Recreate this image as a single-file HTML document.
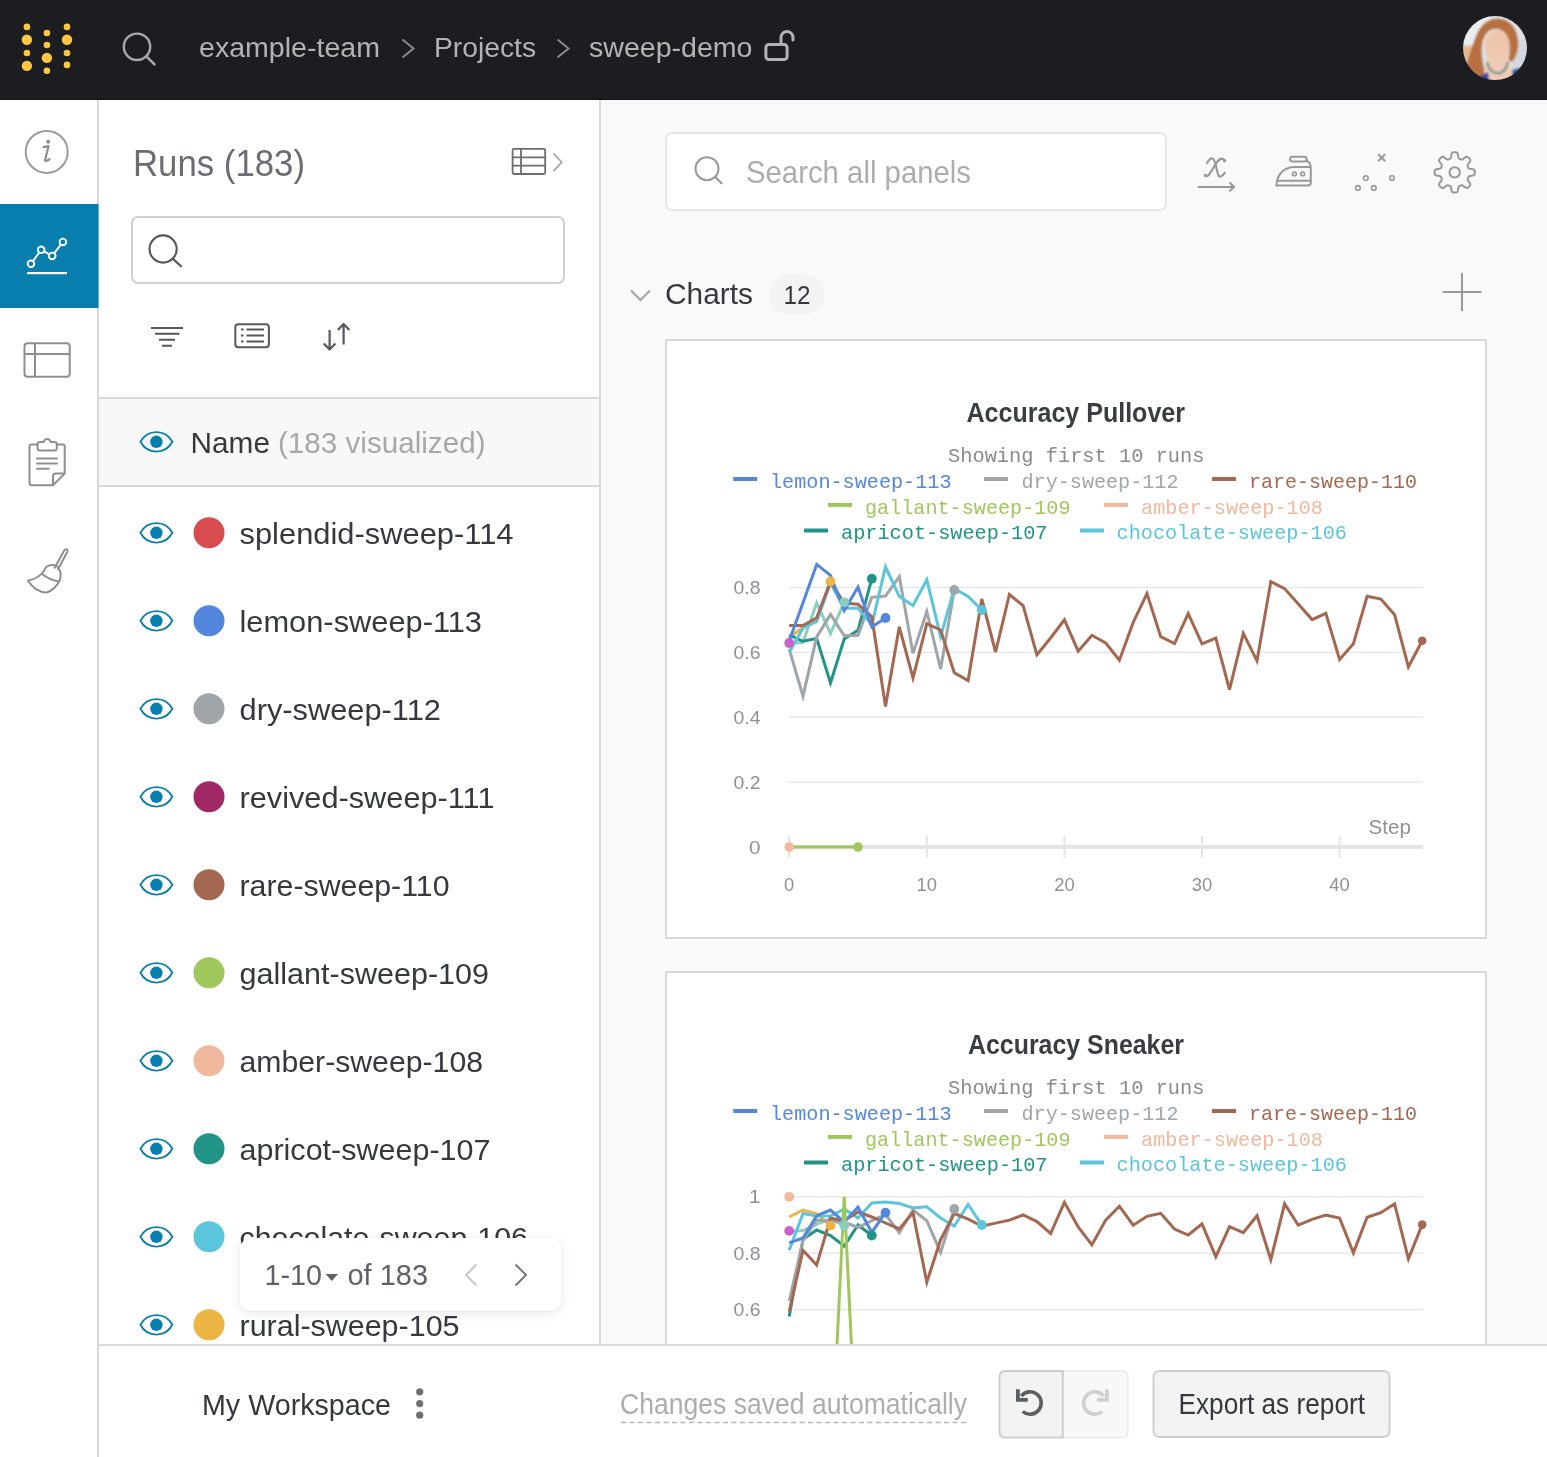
<!DOCTYPE html>
<html><head><meta charset="utf-8"><title>sweep-demo workspace</title>
<style>
html,body{margin:0;padding:0;width:1547px;height:1457px;overflow:hidden;background:#fff}
svg{display:block;font-family:"Liberation Sans",sans-serif;will-change:transform}
</style></head>
<body>
<svg width="1547" height="1457" viewBox="0 0 1547 1457">
<rect x="0" y="0" width="1547" height="1457" fill="#ffffff"/>
<rect x="600" y="100" width="947" height="1245" fill="#f9f9f9"/>
<rect x="0" y="0" width="1547" height="100" fill="#1c1d21"/>
<rect x="0" y="99" width="1547" height="1" fill="#131417"/>
<circle cx="26.9" cy="26.9" r="3.3" fill="#ffc640"/>
<circle cx="26.9" cy="39.8" r="5.2" fill="#ffc640"/>
<circle cx="26.9" cy="53.0" r="3.3" fill="#ffc640"/>
<circle cx="26.9" cy="65.9" r="5.2" fill="#ffc640"/>
<circle cx="46.9" cy="33.0" r="3.3" fill="#ffc640"/>
<circle cx="46.9" cy="45.0" r="3.3" fill="#ffc640"/>
<circle cx="46.9" cy="57.9" r="5.2" fill="#ffc640"/>
<circle cx="46.9" cy="70.8" r="3.3" fill="#ffc640"/>
<circle cx="67.0" cy="26.9" r="3.3" fill="#ffc640"/>
<circle cx="67.0" cy="39.8" r="5.2" fill="#ffc640"/>
<circle cx="67.0" cy="53.0" r="3.3" fill="#ffc640"/>
<circle cx="67.0" cy="64.9" r="3.3" fill="#ffc640"/>
<circle cx="137" cy="46.8" r="13.2" fill="none" stroke="#a9a9a9" stroke-width="2.4"/>
<path d="M146.6,56.6 L154.5,64.4" fill="none" stroke="#a9a9a9" stroke-width="2.6" stroke-linecap="round"/>
<text x="199.0" y="57.2" font-size="28.4" fill="#b3b3b3" textLength="181.0" lengthAdjust="spacingAndGlyphs">example-team</text>
<path d="M402.5,39.5 L413.5,48.5 L402.5,57.5" fill="none" stroke="#8a8a8a" stroke-width="2"/>
<text x="434.0" y="57.2" font-size="28.4" fill="#b3b3b3" textLength="102.0" lengthAdjust="spacingAndGlyphs">Projects</text>
<path d="M557.5,39.5 L568.5,48.5 L557.5,57.5" fill="none" stroke="#8a8a8a" stroke-width="2"/>
<text x="589.0" y="57.2" font-size="28.4" fill="#b3b3b3" textLength="163.5" lengthAdjust="spacingAndGlyphs">sweep-demo</text>
<rect x="765.9" y="44.5" width="21.2" height="15.0" fill="none" stroke="#b3b3b3" stroke-width="3" rx="3"/>
<path d="M781,43 V37.5 A6,6 0 0 1 793,37.5 V40" fill="none" stroke="#b3b3b3" stroke-width="3" stroke-linecap="round"/>
<defs><clipPath id="av"><circle cx="1495" cy="48.1" r="32"/></clipPath>
<filter id="blur2" x="-20%" y="-20%" width="140%" height="140%"><feGaussianBlur stdDeviation="1.0"/></filter>
<filter id="sh" x="-20%" y="-40%" width="140%" height="180%"><feDropShadow dx="0" dy="2" stdDeviation="5" flood-color="#000" flood-opacity="0.10"/></filter>
</defs>
<g clip-path="url(#av)"><g filter="url(#blur2)">
<rect x="1460" y="14" width="72" height="70" fill="#dde2e6"/>
<rect x="1460" y="14" width="30" height="30" fill="#eceeee"/>
<rect x="1460" y="46" width="16" height="22" fill="#e6b790"/>
<rect x="1512" y="40" width="20" height="44" fill="#d3d9de"/>
<path d="M1486,22 C1500,13 1517,22 1518,40 C1519,50 1516,58 1512,62 L1508,60 C1511,50 1510,38 1504,32 C1498,26 1488,28 1484,38 C1480,48 1482,58 1484,68 C1486,76 1482,82 1478,86 L1460,86 C1466,70 1470,50 1476,36 C1478,30 1482,25 1486,22 Z" fill="#b8703f" stroke="none" stroke-width="2"/>
<ellipse cx="1497" cy="45.5" rx="12.5" ry="15.5" fill="#eec6ae"/>
<path d="M1487,56 L1508,56 L1514,86 L1482,86 Z" fill="#efcbb6" stroke="none" stroke-width="2"/>
<path d="M1480,76 L1488,72 L1490,86 L1478,86 Z" fill="#3b4aa0" stroke="none" stroke-width="2"/>
<path d="M1512,70 L1526,66 L1530,86 L1514,86 Z" fill="#3b4aa0" stroke="none" stroke-width="2"/>
<path d="M1487,62 C1490,76 1504,78 1508,62" fill="none" stroke="#5b8c86" stroke-width="2.2"/>
</g></g>
<rect x="97" y="100" width="2" height="1357" fill="#d9d9d9"/>
<circle cx="46.7" cy="151.9" r="21" fill="none" stroke="#9a9a9a" stroke-width="2"/>
<circle cx="48.2" cy="141.8" r="2.0" fill="#8f8f8f"/>
<path d="M43.5,147.2 L48.5,146.2 L45.2,159.5 C44.8,161.2 45.8,161.6 49.6,159.2" fill="none" stroke="#8f8f8f" stroke-width="2.2" stroke-linecap="round" stroke-linejoin="round"/>
<rect x="0" y="204" width="98.5" height="104" fill="#077ead"/>
<path d="M31,263.8 L41.2,249.8 L52.2,255.9 L62.9,241.9" fill="none" stroke="#ffffff" stroke-width="1.9"/>
<circle cx="31" cy="263.8" r="3.3" fill="#077ead" stroke="#ffffff" stroke-width="1.9"/>
<circle cx="41.2" cy="249.8" r="3.3" fill="#077ead" stroke="#ffffff" stroke-width="1.9"/>
<circle cx="52.2" cy="255.9" r="3.3" fill="#077ead" stroke="#ffffff" stroke-width="1.9"/>
<circle cx="62.9" cy="241.9" r="3.3" fill="#077ead" stroke="#ffffff" stroke-width="1.9"/>
<rect x="27.2" y="272" width="39.7" height="2.2" fill="#ffffff"/>
<rect x="24.5" y="343.3" width="45.2" height="33.5" fill="none" stroke="#8f8f8f" stroke-width="2" rx="3"/>
<path d="M24.5,354 H69.7 M35,343.3 V376.8" fill="none" stroke="#8f8f8f" stroke-width="2"/>
<path d="M37.6,444.5 H31.5 Q29.5,444.5 29.5,446.5 V483.3 Q29.5,485.3 31.5,485.3 H53 L64.7,473.6 V446.5 Q64.7,444.5 62.7,444.5 H56.8" fill="none" stroke="#8f8f8f" stroke-width="2" stroke-linejoin="round"/>
<path d="M64.7,473.6 H56 Q53,473.6 53,476.6 V485.3" fill="none" stroke="#8f8f8f" stroke-width="2" stroke-linejoin="round"/>
<path d="M39.8,442 H43.6 Q44.6,439 47.2,439 Q49.8,439 50.8,442 H54.6 Q56.8,442 56.8,444.2 V448 Q56.8,450.5 54.6,450.5 H39.8 Q37.6,450.5 37.6,448 V444.2 Q37.6,442 39.8,442 Z" fill="none" stroke="#8f8f8f" stroke-width="2" stroke-linejoin="round"/>
<path d="M36.2,458.4 H57.8 M36.2,463.6 H57.8 M36.2,468.8 H49.6" fill="none" stroke="#8f8f8f" stroke-width="2"/>
<path d="M54.3,568.5 L64.2,550.5 Q65.8,548.3 67.3,549.8 Q68,551 67,552.5 L57.6,570" fill="none" stroke="#8f8f8f" stroke-width="2" stroke-linejoin="round"/>
<path d="M46.5,566.8 Q52,563 58,567 Q62,572 60,580 Q55,590 46.5,592.5 Q35,592 28,580.5 Q38,579 44,571 Q45,568 46.5,566.8 Z" fill="none" stroke="#8f8f8f" stroke-width="2" stroke-linejoin="round"/>
<path d="M41.5,573.5 Q49,580 59.5,581.5" fill="none" stroke="#8f8f8f" stroke-width="2"/>
<rect x="599" y="100" width="2" height="1245" fill="#d9d9d9"/>
<text x="133.0" y="176.0" font-size="36.5" fill="#6a6e73" textLength="172.0" lengthAdjust="spacingAndGlyphs">Runs (183)</text>
<rect x="512.6" y="148.8" width="32.6" height="25.2" fill="none" stroke="#6a6e73" stroke-width="1.8" rx="1.5"/>
<path d="M512.6,157.3 H545.2 M512.6,165.6 H545.2 M521,148.8 V174" fill="none" stroke="#6a6e73" stroke-width="1.8"/>
<path d="M553.4,153.3 L561.7,162.2 L553.4,171.1" fill="none" stroke="#a8a8a8" stroke-width="1.8"/>
<rect x="132" y="217" width="432" height="66" fill="#ffffff" stroke="#d0d0d0" stroke-width="2" rx="6"/>
<circle cx="163.1" cy="249" r="13.6" fill="none" stroke="#55585c" stroke-width="2.1"/>
<path d="M172.8,258.6 L181,266.3" fill="none" stroke="#55585c" stroke-width="2.2" stroke-linecap="round"/>
<path d="M151,327.9 H183 M155,333.8 H179.5 M159,339.8 H175 M162,345.7 H172" fill="none" stroke="#55585c" stroke-width="2"/>
<rect x="235.3" y="324.2" width="33.6" height="23" fill="none" stroke="#55585c" stroke-width="2" rx="3"/>
<path d="M241,329.5 H243.5 M246.5,329.5 H264 M241,335.5 H243.5 M246.5,335.5 H264 M241,341.5 H243.5 M246.5,341.5 H264" fill="none" stroke="#55585c" stroke-width="1.8"/>
<path d="M329.6,330 V349 M323.8,343.5 L329.6,349.6 L335.4,343.5" fill="none" stroke="#55585c" stroke-width="2.2" stroke-linejoin="round"/>
<path d="M343.6,344.5 V324.5 M337.8,330 L343.6,323.9 L349.4,330" fill="none" stroke="#55585c" stroke-width="2.2" stroke-linejoin="round"/>
<rect x="99" y="399" width="500" height="86.5" fill="#f8f8f8"/>
<rect x="99" y="397" width="500" height="2" fill="#d9d9d9"/>
<rect x="99" y="485" width="500" height="2" fill="#d9d9d9"/>
<path d="M140.4,441.8 C147.4,428.8 165.4,428.8 172.4,441.8 C165.4,454.8 147.4,454.8 140.4,441.8 Z" fill="none" stroke="#077ead" stroke-width="1.8" stroke-linejoin="round"/>
<circle cx="156.4" cy="441.8" r="6.2" fill="#077ead"/>
<text x="190.5" y="452.8" font-size="30.3" fill="#35393d" textLength="79.5" lengthAdjust="spacingAndGlyphs">Name</text>
<text x="278.0" y="452.8" font-size="30.3" fill="#a8a8a8" textLength="207.5" lengthAdjust="spacingAndGlyphs">(183 visualized)</text>
<path d="M140.4,532.8 C147.4,519.8 165.4,519.8 172.4,532.8 C165.4,545.8 147.4,545.8 140.4,532.8 Z" fill="none" stroke="#077ead" stroke-width="1.8" stroke-linejoin="round"/>
<circle cx="156.4" cy="532.8" r="6.2" fill="#077ead"/>
<circle cx="209" cy="532.8" r="15.5" fill="#d84c4f"/>
<text x="239.5" y="543.8" font-size="30.3" fill="#35393d" textLength="274.0" lengthAdjust="spacingAndGlyphs">splendid-sweep-114</text>
<path d="M140.4,620.8 C147.4,607.8 165.4,607.8 172.4,620.8 C165.4,633.8 147.4,633.8 140.4,620.8 Z" fill="none" stroke="#077ead" stroke-width="1.8" stroke-linejoin="round"/>
<circle cx="156.4" cy="620.8" r="6.2" fill="#077ead"/>
<circle cx="209" cy="620.8" r="15.5" fill="#5387dd"/>
<text x="239.5" y="631.8" font-size="30.3" fill="#35393d" textLength="242.5" lengthAdjust="spacingAndGlyphs">lemon-sweep-113</text>
<path d="M140.4,708.8 C147.4,695.8 165.4,695.8 172.4,708.8 C165.4,721.8 147.4,721.8 140.4,708.8 Z" fill="none" stroke="#077ead" stroke-width="1.8" stroke-linejoin="round"/>
<circle cx="156.4" cy="708.8" r="6.2" fill="#077ead"/>
<circle cx="209" cy="708.8" r="15.5" fill="#a0a5a9"/>
<text x="239.5" y="719.8" font-size="30.3" fill="#35393d" textLength="201.5" lengthAdjust="spacingAndGlyphs">dry-sweep-112</text>
<path d="M140.4,796.8 C147.4,783.8 165.4,783.8 172.4,796.8 C165.4,809.8 147.4,809.8 140.4,796.8 Z" fill="none" stroke="#077ead" stroke-width="1.8" stroke-linejoin="round"/>
<circle cx="156.4" cy="796.8" r="6.2" fill="#077ead"/>
<circle cx="209" cy="796.8" r="15.5" fill="#a02864"/>
<text x="239.5" y="807.8" font-size="30.3" fill="#35393d" textLength="255.0" lengthAdjust="spacingAndGlyphs">revived-sweep-111</text>
<path d="M140.4,884.8 C147.4,871.8 165.4,871.8 172.4,884.8 C165.4,897.8 147.4,897.8 140.4,884.8 Z" fill="none" stroke="#077ead" stroke-width="1.8" stroke-linejoin="round"/>
<circle cx="156.4" cy="884.8" r="6.2" fill="#077ead"/>
<circle cx="209" cy="884.8" r="15.5" fill="#a46750"/>
<text x="239.5" y="895.8" font-size="30.3" fill="#35393d" textLength="210.0" lengthAdjust="spacingAndGlyphs">rare-sweep-110</text>
<path d="M140.4,972.8 C147.4,959.8 165.4,959.8 172.4,972.8 C165.4,985.8 147.4,985.8 140.4,972.8 Z" fill="none" stroke="#077ead" stroke-width="1.8" stroke-linejoin="round"/>
<circle cx="156.4" cy="972.8" r="6.2" fill="#077ead"/>
<circle cx="209" cy="972.8" r="15.5" fill="#a0c75c"/>
<text x="239.5" y="983.8" font-size="30.3" fill="#35393d" textLength="249.5" lengthAdjust="spacingAndGlyphs">gallant-sweep-109</text>
<path d="M140.4,1060.8 C147.4,1047.8 165.4,1047.8 172.4,1060.8 C165.4,1073.8 147.4,1073.8 140.4,1060.8 Z" fill="none" stroke="#077ead" stroke-width="1.8" stroke-linejoin="round"/>
<circle cx="156.4" cy="1060.8" r="6.2" fill="#077ead"/>
<circle cx="209" cy="1060.8" r="15.5" fill="#f0b89c"/>
<text x="239.5" y="1071.8" font-size="30.3" fill="#35393d" textLength="243.5" lengthAdjust="spacingAndGlyphs">amber-sweep-108</text>
<path d="M140.4,1148.8 C147.4,1135.8 165.4,1135.8 172.4,1148.8 C165.4,1161.8 147.4,1161.8 140.4,1148.8 Z" fill="none" stroke="#077ead" stroke-width="1.8" stroke-linejoin="round"/>
<circle cx="156.4" cy="1148.8" r="6.2" fill="#077ead"/>
<circle cx="209" cy="1148.8" r="15.5" fill="#229487"/>
<text x="239.5" y="1159.8" font-size="30.3" fill="#35393d" textLength="251.0" lengthAdjust="spacingAndGlyphs">apricot-sweep-107</text>
<path d="M140.4,1236.8 C147.4,1223.8 165.4,1223.8 172.4,1236.8 C165.4,1249.8 147.4,1249.8 140.4,1236.8 Z" fill="none" stroke="#077ead" stroke-width="1.8" stroke-linejoin="round"/>
<circle cx="156.4" cy="1236.8" r="6.2" fill="#077ead"/>
<circle cx="209" cy="1236.8" r="15.5" fill="#5bc5db"/>
<text x="239.5" y="1247.8" font-size="30.3" fill="#35393d" textLength="288.5" lengthAdjust="spacingAndGlyphs">chocolate-sweep-106</text>
<path d="M140.4,1324.8 C147.4,1311.8 165.4,1311.8 172.4,1324.8 C165.4,1337.8 147.4,1337.8 140.4,1324.8 Z" fill="none" stroke="#077ead" stroke-width="1.8" stroke-linejoin="round"/>
<circle cx="156.4" cy="1324.8" r="6.2" fill="#077ead"/>
<circle cx="209" cy="1324.8" r="15.5" fill="#ebb443"/>
<text x="239.5" y="1335.8" font-size="30.3" fill="#35393d" textLength="220.0" lengthAdjust="spacingAndGlyphs">rural-sweep-105</text>
<rect x="666" y="133" width="500" height="77" fill="#ffffff" stroke="#e6e6e6" stroke-width="2" rx="6"/>
<circle cx="707" cy="168.7" r="11.5" fill="none" stroke="#999999" stroke-width="2"/>
<path d="M715.3,177 L721.5,183.2" fill="none" stroke="#999999" stroke-width="2.2" stroke-linecap="round"/>
<text x="746.0" y="183.0" font-size="31.5" fill="#adadad" textLength="225.0" lengthAdjust="spacingAndGlyphs">Search all panels</text>
<path d="M1207,163 C1209,159.5 1211,158 1212.5,158.5 C1214,159 1215,162 1216,166 L1217.5,172.5 C1218.5,176 1219.5,177 1221,176.5 C1222.5,176 1223.5,174.5 1224.8,172.8" fill="none" stroke="#999999" stroke-width="2.2" stroke-linecap="round"/>
<path d="M1224.5,160.5 C1223,158.5 1221,158.5 1219.5,159.5 C1217.5,161 1215,165 1213,168.5 L1209.5,174 C1208,176.5 1206.5,176.5 1205.5,175.5" fill="none" stroke="#999999" stroke-width="2.2" stroke-linecap="round"/>
<circle cx="1224.6" cy="160.8" r="1.7" fill="#999999"/>
<circle cx="1205.5" cy="175.4" r="1.7" fill="#999999"/>
<path d="M1197.8,186.9 H1234 M1229.5,182.6 L1234.2,186.9 L1229.5,191.2" fill="none" stroke="#999999" stroke-width="2" stroke-linejoin="round"/>
<path d="M1276.3,185.5 C1277,174 1284,167 1295,167 H1310.8 V182.5 Q1310.8,185.5 1307.8,185.5 Z" fill="none" stroke="#999999" stroke-width="2" stroke-linejoin="round"/>
<path d="M1277,180.7 H1310.8" fill="none" stroke="#999999" stroke-width="2"/>
<path d="M1292.5,156.8 H1304 Q1306.8,156.8 1306.8,159.2 Q1306.8,161.5 1304,161.5 H1292.5 Q1290,161.5 1290,159.2 Q1290,156.8 1292.5,156.8 Z M1305,160.5 Q1310.5,161.5 1310.5,166.5" fill="none" stroke="#999999" stroke-width="2"/>
<circle cx="1294.4" cy="173.9" r="1.9" fill="none" stroke="#999999" stroke-width="1.6"/>
<circle cx="1302.7" cy="173.9" r="1.9" fill="none" stroke="#999999" stroke-width="1.6"/>
<path d="M1378.2,154.2 L1385.2,161.2 M1385.2,154.2 L1378.2,161.2" fill="none" stroke="#999999" stroke-width="2"/>
<circle cx="1357.9" cy="187.9" r="2.3" fill="none" stroke="#999999" stroke-width="1.6"/>
<circle cx="1365.8" cy="178" r="2.3" fill="none" stroke="#999999" stroke-width="1.6"/>
<circle cx="1373.8" cy="187.9" r="2.3" fill="none" stroke="#999999" stroke-width="1.6"/>
<circle cx="1392" cy="178" r="2.3" fill="none" stroke="#999999" stroke-width="1.6"/>
<path d="M1474.90,172.40 L1474.89,172.75 L1474.87,173.10 L1474.84,173.46 L1474.78,173.80 L1474.70,174.15 L1474.57,174.49 L1474.36,174.81 L1474.03,175.12 L1473.52,175.38 L1472.80,175.59 L1471.91,175.74 L1470.96,175.86 L1470.15,175.97 L1469.53,176.10 L1469.11,176.26 L1468.83,176.45 L1468.63,176.66 L1468.48,176.88 L1468.36,177.10 L1468.25,177.33 L1468.15,177.56 L1468.05,177.79 L1467.96,178.03 L1467.86,178.26 L1467.77,178.49 L1467.69,178.73 L1467.61,178.98 L1467.56,179.24 L1467.56,179.53 L1467.62,179.86 L1467.80,180.27 L1468.14,180.80 L1468.65,181.46 L1469.23,182.20 L1469.76,182.94 L1470.12,183.60 L1470.29,184.15 L1470.31,184.59 L1470.22,184.97 L1470.08,185.30 L1469.89,185.61 L1469.69,185.89 L1469.46,186.17 L1469.23,186.43 L1468.98,186.68 L1468.73,186.93 L1468.47,187.16 L1468.19,187.39 L1467.91,187.59 L1467.60,187.78 L1467.27,187.92 L1466.89,188.01 L1466.45,187.99 L1465.90,187.82 L1465.24,187.46 L1464.50,186.93 L1463.76,186.35 L1463.10,185.84 L1462.57,185.50 L1462.16,185.32 L1461.83,185.26 L1461.54,185.26 L1461.28,185.31 L1461.03,185.39 L1460.79,185.47 L1460.56,185.56 L1460.33,185.66 L1460.09,185.75 L1459.86,185.85 L1459.63,185.95 L1459.40,186.06 L1459.18,186.18 L1458.96,186.33 L1458.75,186.53 L1458.56,186.81 L1458.40,187.23 L1458.27,187.85 L1458.16,188.66 L1458.04,189.61 L1457.89,190.50 L1457.68,191.22 L1457.42,191.73 L1457.11,192.06 L1456.79,192.27 L1456.45,192.40 L1456.10,192.48 L1455.76,192.54 L1455.40,192.57 L1455.05,192.59 L1454.70,192.60 L1454.35,192.59 L1454.00,192.57 L1453.64,192.54 L1453.30,192.48 L1452.95,192.40 L1452.61,192.27 L1452.29,192.06 L1451.98,191.73 L1451.72,191.22 L1451.51,190.50 L1451.36,189.61 L1451.24,188.66 L1451.13,187.85 L1451.00,187.23 L1450.84,186.81 L1450.65,186.53 L1450.44,186.33 L1450.22,186.18 L1450.00,186.06 L1449.77,185.95 L1449.54,185.85 L1449.31,185.75 L1449.07,185.66 L1448.84,185.56 L1448.61,185.47 L1448.37,185.39 L1448.12,185.31 L1447.86,185.26 L1447.57,185.26 L1447.24,185.32 L1446.83,185.50 L1446.30,185.84 L1445.64,186.35 L1444.90,186.93 L1444.16,187.46 L1443.50,187.82 L1442.95,187.99 L1442.51,188.01 L1442.13,187.92 L1441.80,187.78 L1441.49,187.59 L1441.21,187.39 L1440.93,187.16 L1440.67,186.93 L1440.42,186.68 L1440.17,186.43 L1439.94,186.17 L1439.71,185.89 L1439.51,185.61 L1439.32,185.30 L1439.18,184.97 L1439.09,184.59 L1439.11,184.15 L1439.28,183.60 L1439.64,182.94 L1440.17,182.20 L1440.75,181.46 L1441.26,180.80 L1441.60,180.27 L1441.78,179.86 L1441.84,179.53 L1441.84,179.24 L1441.79,178.98 L1441.71,178.73 L1441.63,178.49 L1441.54,178.26 L1441.44,178.03 L1441.35,177.79 L1441.25,177.56 L1441.15,177.33 L1441.04,177.10 L1440.92,176.88 L1440.77,176.66 L1440.57,176.45 L1440.29,176.26 L1439.87,176.10 L1439.25,175.97 L1438.44,175.86 L1437.49,175.74 L1436.60,175.59 L1435.88,175.38 L1435.37,175.12 L1435.04,174.81 L1434.83,174.49 L1434.70,174.15 L1434.62,173.80 L1434.56,173.46 L1434.53,173.10 L1434.51,172.75 L1434.50,172.40 L1434.51,172.05 L1434.53,171.70 L1434.56,171.34 L1434.62,171.00 L1434.70,170.65 L1434.83,170.31 L1435.04,169.99 L1435.37,169.68 L1435.88,169.42 L1436.60,169.21 L1437.49,169.06 L1438.44,168.94 L1439.25,168.83 L1439.87,168.70 L1440.29,168.54 L1440.57,168.35 L1440.77,168.14 L1440.92,167.92 L1441.04,167.70 L1441.15,167.47 L1441.25,167.24 L1441.35,167.01 L1441.44,166.77 L1441.54,166.54 L1441.63,166.31 L1441.71,166.07 L1441.79,165.82 L1441.84,165.56 L1441.84,165.27 L1441.78,164.94 L1441.60,164.53 L1441.26,164.00 L1440.75,163.34 L1440.17,162.60 L1439.64,161.86 L1439.28,161.20 L1439.11,160.65 L1439.09,160.21 L1439.18,159.83 L1439.32,159.50 L1439.51,159.19 L1439.71,158.91 L1439.94,158.63 L1440.17,158.37 L1440.42,158.12 L1440.67,157.87 L1440.93,157.64 L1441.21,157.41 L1441.49,157.21 L1441.80,157.02 L1442.13,156.88 L1442.51,156.79 L1442.95,156.81 L1443.50,156.98 L1444.16,157.34 L1444.90,157.87 L1445.64,158.45 L1446.30,158.96 L1446.83,159.30 L1447.24,159.48 L1447.57,159.54 L1447.86,159.54 L1448.12,159.49 L1448.37,159.41 L1448.61,159.33 L1448.84,159.24 L1449.07,159.14 L1449.31,159.05 L1449.54,158.95 L1449.77,158.85 L1450.00,158.74 L1450.22,158.62 L1450.44,158.47 L1450.65,158.27 L1450.84,157.99 L1451.00,157.57 L1451.13,156.95 L1451.24,156.14 L1451.36,155.19 L1451.51,154.30 L1451.72,153.58 L1451.98,153.07 L1452.29,152.74 L1452.61,152.53 L1452.95,152.40 L1453.30,152.32 L1453.64,152.26 L1454.00,152.23 L1454.35,152.21 L1454.70,152.20 L1455.05,152.21 L1455.40,152.23 L1455.76,152.26 L1456.10,152.32 L1456.45,152.40 L1456.79,152.53 L1457.11,152.74 L1457.42,153.07 L1457.68,153.58 L1457.89,154.30 L1458.04,155.19 L1458.16,156.14 L1458.27,156.95 L1458.40,157.57 L1458.56,157.99 L1458.75,158.27 L1458.96,158.47 L1459.18,158.62 L1459.40,158.74 L1459.63,158.85 L1459.86,158.95 L1460.09,159.05 L1460.33,159.14 L1460.56,159.24 L1460.79,159.33 L1461.03,159.41 L1461.28,159.49 L1461.54,159.54 L1461.83,159.54 L1462.16,159.48 L1462.57,159.30 L1463.10,158.96 L1463.76,158.45 L1464.50,157.87 L1465.24,157.34 L1465.90,156.98 L1466.45,156.81 L1466.89,156.79 L1467.27,156.88 L1467.60,157.02 L1467.91,157.21 L1468.19,157.41 L1468.47,157.64 L1468.73,157.87 L1468.98,158.12 L1469.23,158.37 L1469.46,158.63 L1469.69,158.91 L1469.89,159.19 L1470.08,159.50 L1470.22,159.83 L1470.31,160.21 L1470.29,160.65 L1470.12,161.20 L1469.76,161.86 L1469.23,162.60 L1468.65,163.34 L1468.14,164.00 L1467.80,164.53 L1467.62,164.94 L1467.56,165.27 L1467.56,165.56 L1467.61,165.82 L1467.69,166.07 L1467.77,166.31 L1467.86,166.54 L1467.96,166.77 L1468.05,167.01 L1468.15,167.24 L1468.25,167.47 L1468.36,167.70 L1468.48,167.92 L1468.63,168.14 L1468.83,168.35 L1469.11,168.54 L1469.53,168.70 L1470.15,168.83 L1470.96,168.94 L1471.91,169.06 L1472.80,169.21 L1473.52,169.42 L1474.03,169.68 L1474.36,169.99 L1474.57,170.31 L1474.70,170.65 L1474.78,171.00 L1474.84,171.34 L1474.87,171.70 L1474.89,172.05 Z" fill="none" stroke="#999999" stroke-width="2" stroke-linejoin="round"/>
<circle cx="1454.7" cy="172.4" r="5.2" fill="none" stroke="#999999" stroke-width="2"/>
<path d="M631,290.5 L640.5,300 L650,290.5" fill="none" stroke="#a3a3a3" stroke-width="2"/>
<text x="665.0" y="304.0" font-size="30.3" fill="#35393d" textLength="88.0" lengthAdjust="spacingAndGlyphs">Charts</text>
<rect x="769.5" y="274.3" width="55" height="40" fill="#f3f3f3" rx="20"/>
<text x="783.5" y="304.0" font-size="26.5" fill="#35393d" textLength="27.0" lengthAdjust="spacingAndGlyphs">12</text>
<path d="M1462,272.7 V311.1 M1442.6,291.9 H1481.4" fill="none" stroke="#9a9a9a" stroke-width="2"/>
<rect x="666" y="340" width="820" height="598" fill="#ffffff" stroke="#d9d9d9" stroke-width="2"/>
<text x="966.5" y="421.6" font-size="27.6" fill="#3a3e42" font-weight="bold" textLength="218.5" lengthAdjust="spacingAndGlyphs">Accuracy Pullover</text>
<text x="948.0" y="461.8" font-size="20.2" fill="#8a8a8a" font-family="Liberation Mono" textLength="256.5" lengthAdjust="spacingAndGlyphs">Showing first 10 runs</text>
<rect x="733.2" y="477.0" width="24" height="4" fill="#5387dd"/>
<text x="770.0" y="487.8" font-size="20.2" fill="#5387dd" font-family="Liberation Mono" textLength="181.5" lengthAdjust="spacingAndGlyphs">lemon-sweep-113</text>
<rect x="984" y="477.0" width="24" height="4" fill="#a0a5a9"/>
<text x="1021.5" y="487.8" font-size="20.2" fill="#a0a5a9" font-family="Liberation Mono" textLength="157.0" lengthAdjust="spacingAndGlyphs">dry-sweep-112</text>
<rect x="1212" y="477.0" width="24" height="4" fill="#a46750"/>
<text x="1249.0" y="487.8" font-size="20.2" fill="#a46750" font-family="Liberation Mono" textLength="168.0" lengthAdjust="spacingAndGlyphs">rare-sweep-110</text>
<rect x="828" y="502.90000000000003" width="24" height="4" fill="#a0c75c"/>
<text x="865.0" y="513.7" font-size="20.2" fill="#a0c75c" font-family="Liberation Mono" textLength="205.5" lengthAdjust="spacingAndGlyphs">gallant-sweep-109</text>
<rect x="1104" y="502.90000000000003" width="24" height="4" fill="#f0b89c"/>
<text x="1141.0" y="513.7" font-size="20.2" fill="#f0b89c" font-family="Liberation Mono" textLength="182.0" lengthAdjust="spacingAndGlyphs">amber-sweep-108</text>
<rect x="804" y="528.5" width="24" height="4" fill="#229487"/>
<text x="841.0" y="539.3" font-size="20.2" fill="#229487" font-family="Liberation Mono" textLength="206.5" lengthAdjust="spacingAndGlyphs">apricot-sweep-107</text>
<rect x="1080" y="528.5" width="24" height="4" fill="#5bc5db"/>
<text x="1116.5" y="539.3" font-size="20.2" fill="#5bc5db" font-family="Liberation Mono" textLength="230.5" lengthAdjust="spacingAndGlyphs">chocolate-sweep-106</text>
<rect x="789" y="586.68" width="634" height="1.5" fill="#e8e8e8"/>
<text x="733.5" y="593.9" font-size="18.4" fill="#8e9196" textLength="27.0" lengthAdjust="spacingAndGlyphs">0.8</text>
<rect x="789" y="651.56" width="634" height="1.5" fill="#e8e8e8"/>
<text x="733.5" y="658.8" font-size="18.4" fill="#8e9196" textLength="27.0" lengthAdjust="spacingAndGlyphs">0.6</text>
<rect x="789" y="716.4399999999999" width="634" height="1.5" fill="#e8e8e8"/>
<text x="733.5" y="723.6" font-size="18.4" fill="#8e9196" textLength="27.0" lengthAdjust="spacingAndGlyphs">0.4</text>
<rect x="789" y="781.3199999999999" width="634" height="1.5" fill="#e8e8e8"/>
<text x="733.5" y="788.5" font-size="18.4" fill="#8e9196" textLength="27.0" lengthAdjust="spacingAndGlyphs">0.2</text>
<rect x="789" y="846.1999999999999" width="634" height="1.5" fill="#e8e8e8"/>
<text x="749.0" y="854.2" font-size="18.4" fill="#8e9196" textLength="11.5" lengthAdjust="spacingAndGlyphs">0</text>
<rect x="789" y="844.9" width="634" height="4" fill="#e4e4e4"/>
<rect x="788.2" y="835.9" width="2" height="22" fill="#e4e4e4"/>
<text x="789.2" y="890.5" font-size="18.4" fill="#8e9196" text-anchor="middle">0</text>
<rect x="925.8000000000001" y="835.9" width="2" height="22" fill="#e4e4e4"/>
<text x="926.8" y="890.5" font-size="18.4" fill="#8e9196" text-anchor="middle">10</text>
<rect x="1063.4" y="835.9" width="2" height="22" fill="#e4e4e4"/>
<text x="1064.4" y="890.5" font-size="18.4" fill="#8e9196" text-anchor="middle">20</text>
<rect x="1201.0" y="835.9" width="2" height="22" fill="#e4e4e4"/>
<text x="1202.0" y="890.5" font-size="18.4" fill="#8e9196" text-anchor="middle">30</text>
<rect x="1338.6" y="835.9" width="2" height="22" fill="#e4e4e4"/>
<text x="1339.6" y="890.5" font-size="18.4" fill="#8e9196" text-anchor="middle">40</text>
<text x="1368.5" y="834.0" font-size="19.5" fill="#8e9196" textLength="42.5" lengthAdjust="spacingAndGlyphs">Step</text>
<defs><clipPath id="c1"><rect x="668" y="341" width="817" height="596"/></clipPath></defs>
<g clip-path="url(#c1)">
<polyline points="789.2,643.5 803.0,642.4 816.7,602.8 830.5,633.6 844.2,602.3" fill="none" stroke="#88cfbf" stroke-width="3" stroke-linejoin="miter" stroke-miterlimit="4"/>
<polyline points="789.2,638.0 803.0,627.0 816.7,620.0 830.5,581.5" fill="none" stroke="#ebb443" stroke-width="3" stroke-linejoin="miter" stroke-miterlimit="4"/>
<polyline points="789.2,635.2 803.0,641.3 816.7,638.5 830.5,683.0 844.2,639.0 858.0,630.3 871.8,578.7" fill="none" stroke="#229487" stroke-width="3" stroke-linejoin="miter" stroke-miterlimit="4"/>
<polyline points="789.2,649.0 803.0,696.2 816.7,636.9 830.5,614.4 844.2,635.8 858.0,635.2 871.8,597.3 885.5,596.0 899.3,576.6 913.0,653.4 926.8,611.5 940.6,669.0 954.3,590.0" fill="none" stroke="#a0a5a9" stroke-width="3" stroke-linejoin="miter" stroke-miterlimit="4"/>
<polyline points="789.2,652.2 803.0,628.0 816.7,621.5 830.5,583.0 844.2,608.3 858.0,608.3 871.8,625.0 885.5,566.8 899.3,596.5 913.0,605.6 926.8,579.7 940.6,636.6 954.3,588.8 968.1,596.5 981.8,610.0" fill="none" stroke="#5bc5db" stroke-width="3" stroke-linejoin="miter" stroke-miterlimit="4"/>
<polyline points="789.2,625.5 803.0,625.5 816.7,617.7 830.5,581.5 844.2,603.0 858.0,604.3 871.8,616.7 885.5,706.4 899.3,626.8 913.0,678.0 926.8,623.7 940.6,630.0 954.3,672.8 968.1,680.6 981.8,599.0 995.6,652.0 1009.4,594.5 1023.1,605.6 1036.9,654.7 1050.6,638.0 1064.4,619.8 1078.2,651.2 1091.9,635.3 1105.7,643.0 1119.4,660.3 1133.2,622.4 1147.0,593.6 1160.7,636.7 1174.5,643.5 1188.2,613.6 1202.0,643.8 1215.8,638.0 1229.5,689.7 1243.3,633.4 1257.0,660.8 1270.8,581.7 1284.6,588.6 1298.3,604.0 1312.1,619.6 1325.8,613.3 1339.6,659.5 1353.4,643.8 1367.1,596.3 1380.9,599.0 1394.6,614.7 1408.4,666.9 1422.2,640.8" fill="none" stroke="#a46750" stroke-width="3" stroke-linejoin="miter" stroke-miterlimit="4"/>
<polyline points="789.2,641.0 803.0,602.8 816.7,564.4 830.5,575.4 844.2,610.5 858.0,587.0 871.8,627.0 885.5,618.0" fill="none" stroke="#5387dd" stroke-width="3" stroke-linejoin="miter" stroke-miterlimit="4"/>
<polyline points="789.2,847.0 803.0,847.0 816.7,847.0 830.5,847.0 844.2,847.0 858.0,847.0" fill="none" stroke="#a0c75c" stroke-width="3" stroke-linejoin="miter" stroke-miterlimit="4"/>
<circle cx="789.2" cy="847.0" r="4.8" fill="#f0b89c"/>
<circle cx="858.0" cy="847.0" r="4.8" fill="#a0c75c"/>
<circle cx="789.2" cy="643.0" r="4.9" fill="#c762c9"/>
<circle cx="830.5" cy="581.5" r="4.9" fill="#ebb443"/>
<circle cx="844.2" cy="602.3" r="4.9" fill="#88cfbf"/>
<circle cx="871.8" cy="578.7" r="4.9" fill="#229487"/>
<circle cx="885.5" cy="618.0" r="4.9" fill="#5387dd"/>
<circle cx="954.3" cy="590.0" r="4.9" fill="#a0a5a9"/>
<circle cx="981.8" cy="610.0" r="4.9" fill="#5bc5db"/>
<circle cx="1422.2" cy="640.8" r="4.3" fill="#a46750"/>
</g>
<rect x="666" y="972" width="820" height="598" fill="#ffffff" stroke="#d9d9d9" stroke-width="2"/>
<text x="968.0" y="1053.6" font-size="27.6" fill="#3a3e42" font-weight="bold" textLength="216.0" lengthAdjust="spacingAndGlyphs">Accuracy Sneaker</text>
<text x="948.0" y="1093.8" font-size="20.2" fill="#8a8a8a" font-family="Liberation Mono" textLength="256.5" lengthAdjust="spacingAndGlyphs">Showing first 10 runs</text>
<rect x="733.2" y="1109.0" width="24" height="4" fill="#5387dd"/>
<text x="770.0" y="1119.8" font-size="20.2" fill="#5387dd" font-family="Liberation Mono" textLength="181.5" lengthAdjust="spacingAndGlyphs">lemon-sweep-113</text>
<rect x="984" y="1109.0" width="24" height="4" fill="#a0a5a9"/>
<text x="1021.5" y="1119.8" font-size="20.2" fill="#a0a5a9" font-family="Liberation Mono" textLength="157.0" lengthAdjust="spacingAndGlyphs">dry-sweep-112</text>
<rect x="1212" y="1109.0" width="24" height="4" fill="#a46750"/>
<text x="1249.0" y="1119.8" font-size="20.2" fill="#a46750" font-family="Liberation Mono" textLength="168.0" lengthAdjust="spacingAndGlyphs">rare-sweep-110</text>
<rect x="828" y="1134.9" width="24" height="4" fill="#a0c75c"/>
<text x="865.0" y="1145.7" font-size="20.2" fill="#a0c75c" font-family="Liberation Mono" textLength="205.5" lengthAdjust="spacingAndGlyphs">gallant-sweep-109</text>
<rect x="1104" y="1134.9" width="24" height="4" fill="#f0b89c"/>
<text x="1141.0" y="1145.7" font-size="20.2" fill="#f0b89c" font-family="Liberation Mono" textLength="182.0" lengthAdjust="spacingAndGlyphs">amber-sweep-108</text>
<rect x="804" y="1160.5" width="24" height="4" fill="#229487"/>
<text x="841.0" y="1171.3" font-size="20.2" fill="#229487" font-family="Liberation Mono" textLength="206.5" lengthAdjust="spacingAndGlyphs">apricot-sweep-107</text>
<rect x="1080" y="1160.5" width="24" height="4" fill="#5bc5db"/>
<text x="1116.5" y="1171.3" font-size="20.2" fill="#5bc5db" font-family="Liberation Mono" textLength="230.5" lengthAdjust="spacingAndGlyphs">chocolate-sweep-106</text>
<rect x="789" y="1196.1" width="634" height="1.5" fill="#e8e8e8"/>
<text x="749.0" y="1203.3" font-size="18.4" fill="#8e9196" textLength="11.5" lengthAdjust="spacingAndGlyphs">1</text>
<rect x="789" y="1252.4999999999998" width="634" height="1.5" fill="#e8e8e8"/>
<text x="733.5" y="1259.7" font-size="18.4" fill="#8e9196" textLength="27.0" lengthAdjust="spacingAndGlyphs">0.8</text>
<rect x="789" y="1308.8999999999999" width="634" height="1.5" fill="#e8e8e8"/>
<text x="733.5" y="1316.1" font-size="18.4" fill="#8e9196" textLength="27.0" lengthAdjust="spacingAndGlyphs">0.6</text>
<rect x="789" y="1365.3" width="634" height="1.5" fill="#e8e8e8"/>
<text x="733.5" y="1372.5" font-size="18.4" fill="#8e9196" textLength="27.0" lengthAdjust="spacingAndGlyphs">0.4</text>
<defs><clipPath id="c2"><rect x="668" y="973" width="817" height="596"/></clipPath></defs>
<g clip-path="url(#c2)">
<polyline points="789.2,1231.8 803.0,1230.5 816.7,1224.4 830.5,1218.8 844.2,1225.6" fill="none" stroke="#88cfbf" stroke-width="3" stroke-linejoin="miter" stroke-miterlimit="4"/>
<polyline points="789.2,1217.0 803.0,1210.0 816.7,1213.9 830.5,1225.6" fill="none" stroke="#ebb443" stroke-width="3" stroke-linejoin="miter" stroke-miterlimit="4"/>
<polyline points="789.2,1316.4 803.0,1239.2 816.7,1230.0 830.5,1235.5 844.2,1246.0 858.0,1225.0 871.8,1235.5" fill="none" stroke="#229487" stroke-width="3" stroke-linejoin="miter" stroke-miterlimit="4"/>
<polyline points="789.2,1301.0 803.0,1240.4 816.7,1220.0 830.5,1221.3 844.2,1222.0 858.0,1227.5 871.8,1220.6 885.5,1214.5 899.3,1232.5 913.0,1209.9 926.8,1220.7 940.6,1252.4 954.3,1209.0" fill="none" stroke="#a0a5a9" stroke-width="3" stroke-linejoin="miter" stroke-miterlimit="4"/>
<polyline points="789.2,1250.3 803.0,1213.5 816.7,1216.0 830.5,1216.0 844.2,1209.0 858.0,1218.0 871.8,1203.0 885.5,1202.0 899.3,1203.5 913.0,1208.0 926.8,1206.8 940.6,1218.0 954.3,1226.0 968.1,1204.4 981.8,1225.0" fill="none" stroke="#5bc5db" stroke-width="3" stroke-linejoin="miter" stroke-miterlimit="4"/>
<polyline points="789.2,1311.5 803.0,1250.3 816.7,1265.0 830.5,1218.2 844.2,1220.6 858.0,1212.0 871.8,1217.0 885.5,1223.0 899.3,1229.0 913.0,1212.6 926.8,1282.3 940.6,1239.7 954.3,1213.5 968.1,1219.0 981.8,1226.1 995.6,1223.1 1009.4,1220.1 1023.1,1214.8 1036.9,1221.6 1050.6,1233.5 1064.4,1202.3 1078.2,1227.0 1091.9,1244.8 1105.7,1220.1 1119.4,1206.2 1133.2,1225.2 1147.0,1216.3 1160.7,1213.3 1174.5,1229.0 1188.2,1235.0 1202.0,1224.0 1215.8,1256.7 1229.5,1226.7 1243.3,1232.6 1257.0,1215.7 1270.8,1259.7 1284.6,1203.8 1298.3,1225.2 1312.1,1219.3 1325.8,1215.1 1339.6,1218.0 1353.4,1252.9 1367.1,1217.2 1380.9,1212.7 1394.6,1203.8 1408.4,1258.8 1422.2,1224.6" fill="none" stroke="#a46750" stroke-width="3" stroke-linejoin="miter" stroke-miterlimit="4"/>
<polyline points="789.2,1242.9 803.0,1238.0 816.7,1215.7 830.5,1210.0 844.2,1221.9 858.0,1207.0 871.8,1232.4 885.5,1212.6" fill="none" stroke="#5387dd" stroke-width="3" stroke-linejoin="miter" stroke-miterlimit="4"/>
<polyline points="789.2,1479.0 803.0,1479.0 816.7,1479.0 830.5,1479.0 844.2,1196.8 858.0,1479.0" fill="none" stroke="#a0c75c" stroke-width="3" stroke-linejoin="miter" stroke-miterlimit="4"/>
<circle cx="789.2" cy="1196.8" r="4.9" fill="#f0b89c"/>
<circle cx="789.2" cy="1230.9" r="4.9" fill="#c762c9"/>
<circle cx="830.5" cy="1225.6" r="4.9" fill="#ebb443"/>
<circle cx="844.2" cy="1225.6" r="4.9" fill="#88cfbf"/>
<circle cx="871.8" cy="1235.5" r="4.9" fill="#229487"/>
<circle cx="885.5" cy="1212.6" r="4.9" fill="#5387dd"/>
<circle cx="954.3" cy="1209.0" r="4.9" fill="#a0a5a9"/>
<circle cx="981.8" cy="1225.0" r="4.9" fill="#5bc5db"/>
<circle cx="1422.2" cy="1224.6" r="4.3" fill="#a46750"/>
</g>
<rect x="240" y="1238" width="321" height="72.5" fill="#ffffff" rx="11" filter="url(#sh)"/>
<text x="264.5" y="1284.8" font-size="29.5" fill="#5f6368" textLength="57.5" lengthAdjust="spacingAndGlyphs">1-10</text>
<path d="M325.6,1274 H338 L331.8,1281 Z" fill="#5f6368" stroke="none" stroke-width="2"/>
<text x="347.5" y="1284.8" font-size="29.5" fill="#5f6368" textLength="80.5" lengthAdjust="spacingAndGlyphs">of 183</text>
<path d="M476.5,1264.5 L466,1275 L476.5,1285.5" fill="none" stroke="#c8c8c8" stroke-width="2"/>
<path d="M515.5,1264.5 L526,1275 L515.5,1285.5" fill="none" stroke="#777777" stroke-width="2"/>
<rect x="99" y="1346" width="1448" height="111" fill="#ffffff"/>
<rect x="99" y="1344" width="1448" height="2" fill="#d9d9d9"/>
<text x="202.0" y="1415.0" font-size="30.3" fill="#35393d" textLength="189.0" lengthAdjust="spacingAndGlyphs">My Workspace</text>
<circle cx="419.7" cy="1391.8" r="3.6" fill="#707070"/>
<circle cx="419.7" cy="1403.6" r="3.6" fill="#707070"/>
<circle cx="419.7" cy="1415.2" r="3.6" fill="#707070"/>
<text x="620.0" y="1414.0" font-size="30.3" fill="#adadad" textLength="347.0" lengthAdjust="spacingAndGlyphs">Changes saved automatically</text>
<line x1="621" y1="1422.5" x2="966" y2="1422.5" stroke="#b5b5b5" stroke-width="1.6" stroke-dasharray="5,3.5"/>
<path d="M1063,1371 H1121.7 Q1127.7,1371 1127.7,1377 V1431.6 Q1127.7,1437.6 1121.7,1437.6 H1063 Z" fill="#f8f8f8" stroke="#ededed" stroke-width="2"/>
<path d="M1062.7,1371 H1005.5 Q999.5,1371 999.5,1377 V1431.6 Q999.5,1437.6 1005.5,1437.6 H1062.7 Z" fill="#f3f3f3" stroke="#cdcdcd" stroke-width="2"/>
<path d="M1021.3,1396 A11.2,11.2 0 1 1 1022.7,1411.5" fill="none" stroke="#5b5f63" stroke-width="3.6"/>
<path d="M1017.9,1389.2 V1399.9 H1027.8" fill="none" stroke="#5b5f63" stroke-width="3.8" stroke-linejoin="miter"/>
<path d="M1103.5,1396 A11.2,11.2 0 1 0 1102.1,1411.5" fill="none" stroke="#d0d0d0" stroke-width="3.6"/>
<path d="M1106.9,1389.2 V1399.9 H1097" fill="none" stroke="#d0d0d0" stroke-width="3.8" stroke-linejoin="miter"/>
<rect x="1153.5" y="1371" width="236" height="66" fill="#f3f3f3" stroke="#cfcfcf" stroke-width="2" rx="6"/>
<text x="1178.5" y="1414.4" font-size="30.3" fill="#35393d" textLength="186.5" lengthAdjust="spacingAndGlyphs">Export as report</text>
</svg>
</body></html>
